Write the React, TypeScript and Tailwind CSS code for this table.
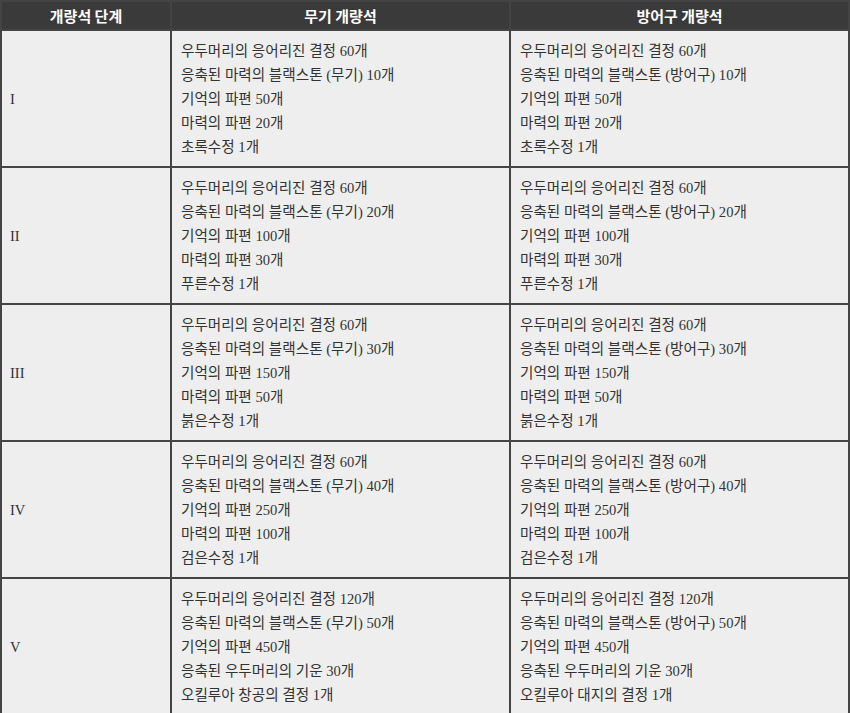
import React from 'react';

type Row = { tier: string; weapon: string[]; armor: string[] };

const rows: Row[] = [
  {
    tier: 'I',
    weapon: ['우두머리의 응어리진 결정 60개', '응축된 마력의 블랙스톤 (무기) 10개', '기억의 파편 50개', '마력의 파편 20개', '초록수정 1개'],
    armor: ['우두머리의 응어리진 결정 60개', '응축된 마력의 블랙스톤 (방어구) 10개', '기억의 파편 50개', '마력의 파편 20개', '초록수정 1개'],
  },
  {
    tier: 'II',
    weapon: ['우두머리의 응어리진 결정 60개', '응축된 마력의 블랙스톤 (무기) 20개', '기억의 파편 100개', '마력의 파편 30개', '푸른수정 1개'],
    armor: ['우두머리의 응어리진 결정 60개', '응축된 마력의 블랙스톤 (방어구) 20개', '기억의 파편 100개', '마력의 파편 30개', '푸른수정 1개'],
  },
  {
    tier: 'III',
    weapon: ['우두머리의 응어리진 결정 60개', '응축된 마력의 블랙스톤 (무기) 30개', '기억의 파편 150개', '마력의 파편 50개', '붉은수정 1개'],
    armor: ['우두머리의 응어리진 결정 60개', '응축된 마력의 블랙스톤 (방어구) 30개', '기억의 파편 150개', '마력의 파편 50개', '붉은수정 1개'],
  },
  {
    tier: 'IV',
    weapon: ['우두머리의 응어리진 결정 60개', '응축된 마력의 블랙스톤 (무기) 40개', '기억의 파편 250개', '마력의 파편 100개', '검은수정 1개'],
    armor: ['우두머리의 응어리진 결정 60개', '응축된 마력의 블랙스톤 (방어구) 40개', '기억의 파편 250개', '마력의 파편 100개', '검은수정 1개'],
  },
  {
    tier: 'V',
    weapon: ['우두머리의 응어리진 결정 120개', '응축된 마력의 블랙스톤 (무기) 50개', '기억의 파편 450개', '응축된 우두머리의 기운 30개', '오킬루아 창공의 결정 1개'],
    armor: ['우두머리의 응어리진 결정 120개', '응축된 마력의 블랙스톤 (방어구) 50개', '기억의 파편 450개', '응축된 우두머리의 기운 30개', '오킬루아 대지의 결정 1개'],
  },
];

const Lines = ({ items }: { items: string[] }) => (
  <>
    {items.map((t, i) => (
      <div key={i}>{t}</div>
    ))}
  </>
);

export default function App() {
  return (
    <div className="w-[850px] bg-[#eeeeee] font-['Liberation_Serif','Noto_Sans_CJK_KR',serif] text-[14.6px] leading-[24px] text-[#333]">
      <table className="w-full border-collapse table-fixed">
        <colgroup>
          <col className="w-[170px]" />
          <col className="w-[339px]" />
          <col />
        </colgroup>
        <thead>
          <tr className="h-[29px] bg-[#3a3a3a] text-white font-['Noto_Sans_CJK_KR',sans-serif] font-bold text-[15px]">
            <th className="border-2 border-[#444] py-0">개량석 단계</th>
            <th className="border-2 border-[#444] py-0">무기 개량석</th>
            <th className="border-2 border-[#444] py-0">방어구 개량석</th>
          </tr>
        </thead>
        <tbody>
          {rows.map((r) => (
            <tr key={r.tier}>
              <td className="border-2 border-[#444] px-[8px] align-middle">{r.tier}</td>
              <td className="border-2 border-[#444] px-[9px] pt-[8px] pb-[7px] align-middle">
                <Lines items={r.weapon} />
              </td>
              <td className="border-2 border-[#444] px-[9px] pt-[8px] pb-[7px] align-middle">
                <Lines items={r.armor} />
              </td>
            </tr>
          ))}
        </tbody>
      </table>
    </div>
  );
}
